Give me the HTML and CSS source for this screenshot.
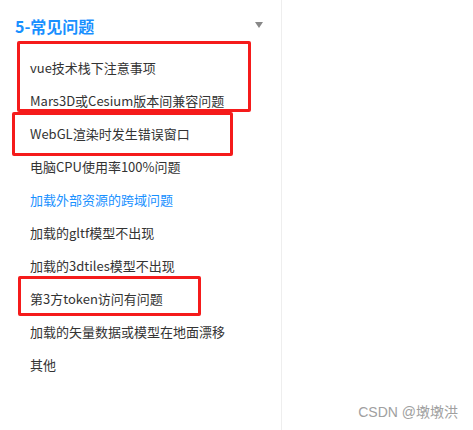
FILE: index.html
```html
<!DOCTYPE html>
<html lang="zh-CN">
<head>
    <meta charset="UTF-8">
    <title>常见问题</title>
    <link rel="stylesheet" href="styles.css">
</head>
<body>
    <div class="sidebar">
        <div class="group-title">
            <span>5-常见问题</span>
            <span class="caret"></span>
        </div>
        <ul class="menu">
            <li>vue技术栈下注意事项</li>
            <li>Mars3D或Cesium版本间兼容问题</li>
            <li>WebGL渲染时发生错误窗口</li>
            <li>电脑CPU使用率100%问题</li>
            <li class="active">加载外部资源的跨域问题</li>
            <li>加载的gltf模型不出现</li>
            <li>加载的3dtiles模型不出现</li>
            <li>第3方token访问有问题</li>
            <li>加载的矢量数据或模型在地面漂移</li>
            <li>其他</li>
        </ul>

        <!-- red annotation boxes drawn over the menu -->
        <div class="mark mark-1"></div>
        <div class="mark mark-2"></div>
        <div class="mark mark-3"></div>
    </div>
    <div class="watermark">CSDN @墩墩洪</div>
</body>
</html>
```

FILE: styles.css
```css
body {
    margin: 0;
    background-color: #fff;
    font-family: "Noto Sans CJK SC", "Noto Sans", sans-serif;
    position: relative;
    width: 473px;
    height: 430px;
    overflow: hidden;
}

.sidebar {
    position: relative;
    width: 281px;
    height: 430px;
    border-right: 1px solid #eeeeee;
    box-sizing: content-box;
}

.group-title {
    display: flex;
    align-items: center;
    justify-content: space-between;
    height: 52px;
    padding: 0 18px 0 15px;
    box-sizing: border-box;
    font-size: 16px;
    font-weight: bold;
    color: #1890ff;
}

.caret {
    width: 0;
    height: 0;
    border-left: 4px solid transparent;
    border-right: 4px solid transparent;
    border-top: 6px solid #888;
    margin-top: -3px;
}

.menu {
    list-style: none;
    margin: 0;
    padding: 0;
}

.menu li {
    height: 33px;
    line-height: 31px;
    padding-left: 30px;
    font-size: 13px;
    color: #333;
    white-space: nowrap;
}

.menu li.active {
    color: #1890ff;
}

.mark {
    position: absolute;
    border: 3px solid #f51b1b;
    border-radius: 2px;
    box-sizing: border-box;
}

.mark-1 {
    left: 17px;
    top: 41px;
    width: 234px;
    height: 71px;
}

.mark-2 {
    left: 12px;
    top: 112px;
    width: 221px;
    height: 44px;
}

.mark-3 {
    left: 18px;
    top: 276px;
    width: 183px;
    height: 40px;
}

.watermark {
    position: absolute;
    right: 15px;
    bottom: 9px;
    font-family: "Liberation Sans", "Noto Sans CJK SC", sans-serif;
    font-size: 14px;
    color: #a0a0a0;
}
```
